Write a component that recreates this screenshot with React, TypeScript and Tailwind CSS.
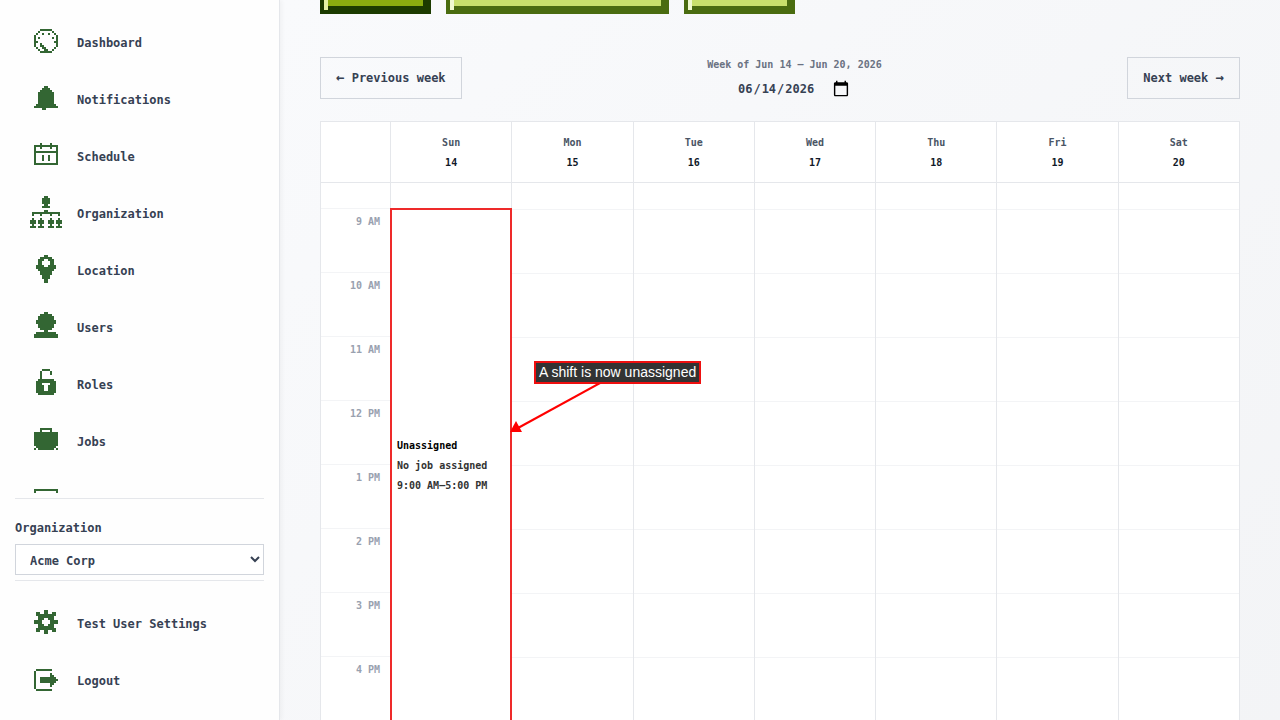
type Bitmap = [row: number, cols: number[][]][];

// 16x16 pixel icons: for each row, the inclusive column spans that are filled.
const icons: Record<string, Bitmap> = {
  dashboard: [
    [2, [[5, 10]]],
    [3, [[4, 4], [11, 11]]],
    [4, [[3, 3], [6, 6], [9, 9], [12, 12]]],
    [5, [[2, 2], [13, 13]]],
    [6, [[2, 2], [4, 4], [11, 11], [13, 13]]],
    [7, [[2, 2], [13, 13]]],
    [8, [[2, 3], [12, 13]]],
    [9, [[2, 2], [5, 5], [13, 13]]],
    [10, [[2, 2], [5, 6], [13, 13]]],
    [11, [[3, 3], [6, 7], [12, 12]]],
    [12, [[4, 4], [7, 8], [11, 11]]],
    [13, [[5, 10]]],
  ],
  bell: [
    [2, [[7, 8]]],
    [3, [[6, 9]]],
    [4, [[5, 10]]],
    [5, [[4, 11]]],
    [6, [[4, 11]]],
    [7, [[4, 11]]],
    [8, [[4, 11]]],
    [9, [[4, 11]]],
    [10, [[4, 11]]],
    [11, [[3, 12]]],
    [12, [[2, 13]]],
    [13, [[6, 7]]],
  ],
  calendar: [
    [2, [[5, 5], [10, 10]]],
    [3, [[2, 13]]],
    [4, [[2, 2], [5, 5], [10, 10], [13, 13]]],
    [5, [[2, 2], [13, 13]]],
    [6, [[2, 13]]],
    [7, [[2, 2], [13, 13]]],
    [8, [[2, 2], [6, 6], [9, 9], [13, 13]]],
    [9, [[2, 2], [6, 6], [9, 9], [13, 13]]],
    [10, [[2, 2], [6, 6], [9, 9], [13, 13]]],
    [11, [[2, 2], [13, 13]]],
    [12, [[2, 13]]],
  ],
  organization: [
    [0, [[7, 8]]],
    [1, [[6, 9]]],
    [2, [[6, 9]]],
    [3, [[6, 9]]],
    [4, [[7, 8]]],
    [5, [[6, 9]]],
    [7, [[7, 8]]],
    [8, [[1, 14]]],
    [9, [[1, 1], [5, 5], [10, 10], [14, 14]]],
    [11, [[1, 1], [5, 5], [10, 10], [14, 14]]],
    [12, [[0, 2], [4, 6], [9, 11], [13, 15]]],
    [13, [[0, 2], [4, 6], [9, 11], [13, 15]]],
    [14, [[1, 1], [5, 5], [10, 10], [14, 14]]],
    [15, [[0, 2], [4, 6], [9, 11], [13, 15]]],
  ],
  pin: [
    [1, [[7, 8]]],
    [2, [[5, 10]]],
    [3, [[4, 6], [9, 11]]],
    [4, [[4, 5], [10, 11]]],
    [5, [[4, 5], [10, 11]]],
    [6, [[3, 6], [9, 12]]],
    [7, [[3, 12]]],
    [8, [[4, 11]]],
    [9, [[5, 10]]],
    [10, [[5, 10]]],
    [11, [[6, 9]]],
    [12, [[6, 9]]],
    [13, [[7, 8]]],
    [14, [[7, 8]]],
  ],
  user: [
    [1, [[7, 8]]],
    [2, [[5, 10]]],
    [3, [[4, 11]]],
    [4, [[4, 11]]],
    [5, [[3, 12]]],
    [6, [[3, 12]]],
    [7, [[4, 11]]],
    [8, [[4, 11]]],
    [9, [[5, 10]]],
    [10, [[7, 8]]],
    [11, [[3, 12]]],
    [12, [[2, 13]]],
    [13, [[2, 13]]],
  ],
  lock: [
    [1, [[6, 9]]],
    [2, [[5, 5], [10, 10]]],
    [3, [[5, 5], [10, 10]]],
    [4, [[5, 5]]],
    [5, [[5, 5]]],
    [6, [[4, 11]]],
    [7, [[3, 12]]],
    [8, [[3, 5], [10, 12]]],
    [9, [[3, 6], [9, 12]]],
    [10, [[3, 6], [9, 12]]],
    [11, [[3, 6], [9, 12]]],
    [12, [[3, 12]]],
    [13, [[4, 11]]],
  ],
  briefcase: [
    [2, [[5, 10]]],
    [3, [[5, 5], [10, 10]]],
    [4, [[2, 13]]],
    [5, [[2, 13]]],
    [6, [[2, 13]]],
    [7, [[2, 13]]],
    [8, [[2, 13]]],
    [9, [[2, 13]]],
    [10, [[2, 13]]],
    [11, [[3, 12]]],
    [12, [[2, 2], [4, 11], [13, 13]]],
  ],
  panel: [
    [4, [[2, 13]]],
    [5, [[2, 2], [13, 13]]],
    [6, [[2, 2], [13, 13]]],
    [7, [[2, 2], [13, 13]]],
    [8, [[2, 13]]],
  ],
  gear: [
    [2, [[7, 8]]],
    [3, [[3, 4], [7, 8], [11, 12]]],
    [4, [[3, 12]]],
    [5, [[4, 11]]],
    [6, [[4, 6], [9, 11]]],
    [7, [[2, 5], [10, 13]]],
    [8, [[2, 5], [10, 13]]],
    [9, [[4, 6], [9, 11]]],
    [10, [[4, 11]]],
    [11, [[3, 12]]],
    [12, [[3, 4], [7, 8], [11, 12]]],
    [13, [[7, 8]]],
  ],
  logout: [
    [3, [[3, 10]]],
    [4, [[2, 2]]],
    [5, [[2, 2], [10, 10]]],
    [6, [[2, 2], [10, 11]]],
    [7, [[2, 2], [5, 12]]],
    [8, [[2, 2], [5, 13]]],
    [9, [[2, 2], [5, 12]]],
    [10, [[2, 2], [10, 11]]],
    [11, [[2, 2], [10, 10]]],
    [12, [[2, 2]]],
    [13, [[3, 10]]],
  ],
};

const navItems = [
  { label: "Dashboard", icon: "dashboard" },
  { label: "Notifications", icon: "bell" },
  { label: "Schedule", icon: "calendar" },
  { label: "Organization", icon: "organization" },
  { label: "Location", icon: "pin" },
  { label: "Users", icon: "user" },
  { label: "Roles", icon: "lock" },
  { label: "Jobs", icon: "briefcase" },
  { label: "", icon: "panel" },
];

const days = [
  { name: "Sun", date: 14 },
  { name: "Mon", date: 15 },
  { name: "Tue", date: 16 },
  { name: "Wed", date: 17 },
  { name: "Thu", date: 18 },
  { name: "Fri", date: 19 },
  { name: "Sat", date: 20 },
];

const hours = ["9 AM", "10 AM", "11 AM", "12 PM", "1 PM", "2 PM", "3 PM", "4 PM"];

const gridCols = "grid grid-cols-[69px_repeat(7,minmax(0,1fr))]";

function PixelIcon({ name }: { name: string }) {
  return (
    <svg viewBox="0 0 16 16" className="h-8 w-8 shrink-0 fill-[#336633]" shapeRendering="crispEdges" aria-hidden="true">
      {icons[name].map(([row, spans]) =>
        spans.map(([from, to]) => (
          <rect key={`${row}-${from}`} x={from} y={row} width={to - from + 1} height={1} />
        ))
      )}
    </svg>
  );
}

function NavLink({ label, icon }: { label: string; icon: string }) {
  return (
    <a href="#" className="flex h-[42px] shrink-0 items-center gap-[15px] px-[15px] text-gray-700">
      <PixelIcon name={icon} />
      <span className="pt-1">{label}</span>
    </a>
  );
}

function Sidebar() {
  return (
    <aside className="flex w-[280px] shrink-0 flex-col border-r border-gray-200 bg-[#fefefe] px-[15px] py-5 shadow-[2px_0_4px_rgba(0,0,0,0.04)]">
      <nav className="mb-[5px] flex min-h-0 flex-1 flex-col gap-[15px] overflow-hidden">
        {navItems.map((item) => (
          <NavLink key={item.icon} {...item} />
        ))}
      </nav>

      <div className="border-y border-gray-200 pb-[5px] pt-[19px]">
        <label htmlFor="organization" className="block leading-5 text-gray-700">
          Organization
        </label>
        <select
          id="organization"
          className="mt-1.5 block h-[31px] w-full border border-gray-300 bg-white pl-2.5 pt-0.5 text-gray-700"
          defaultValue="acme"
        >
          <option value="acme">Acme Corp</option>
        </select>
      </div>

      <div className="mt-5 flex flex-col gap-[15px]">
        <NavLink label="Test User Settings" icon="gear" />
        <NavLink label="Logout" icon="logout" />
      </div>
    </aside>
  );
}

function ViewButtons() {
  return (
    <div className="flex h-3.5 shrink-0 items-end gap-[15px] overflow-hidden">
      <button
        type="button"
        className="h-12 w-[111px] shrink-0 border-4 border-[#1c3b00] bg-[#8aac0f] shadow-[inset_4px_4px_0_#e4f2a4,inset_-4px_-4px_0_#1c3b00]"
      />
      <button
        type="button"
        className="h-12 w-[223px] shrink-0 border-4 border-[#4a6c10] bg-[#c8e06c] shadow-[inset_4px_4px_0_#f0fad0,inset_-4px_-4px_0_#4a6c10]"
      />
      <button
        type="button"
        className="h-12 w-[111px] shrink-0 border-4 border-[#4a6c10] bg-[#c8e06c] shadow-[inset_4px_4px_0_#f0fad0,inset_-4px_-4px_0_#4a6c10]"
      />
    </div>
  );
}

function WeekPicker() {
  return (
    <div className="mt-[43px] flex shrink-0 items-center justify-between">
      <button type="button" className="h-[42px] border border-gray-300 px-[15px] text-gray-700">
        <span className="text-[14px] leading-4">←</span> Previous week
      </button>
      <div className="flex h-[42px] flex-col items-center justify-between">
        <label htmlFor="week" className="text-[10px] leading-4 text-gray-500">
          Week of Jun 14 – Jun 20, 2026
        </label>
        <input
          id="week"
          type="date"
          defaultValue="2026-06-14"
          className="h-5 bg-transparent text-gray-700 [&::-webkit-calendar-picker-indicator]:ms-0 [&::-webkit-calendar-picker-indicator]:h-[18px] [&::-webkit-calendar-picker-indicator]:w-[18px]"
        />
      </div>
      <button type="button" className="h-[42px] border border-gray-300 px-[15px] text-gray-700">
        Next week <span className="text-[14px] leading-4">→</span>
      </button>
    </div>
  );
}

function Shift() {
  return (
    <div className="absolute -left-px -right-px top-[25px] z-10 flex h-[514px] flex-col justify-center border-2 border-[#ee2a2a] bg-white px-[5px] pt-0.5 text-[10px] leading-5 text-[#333333]">
      <div className="text-black">Unassigned</div>
      <div>No job assigned</div>
      <div>9:00 AM–5:00 PM</div>
    </div>
  );
}

// Callout with an arrow that points back at the shift's right edge.
function Callout() {
  return (
    <div className="absolute left-[119px] top-[178px] z-20 flex flex-col">
      <div className="ml-6 border-2 border-[#ee0f0f] bg-[#333333] px-[3px] font-['Liberation_Sans',Arial,sans-serif] text-[14px] font-normal leading-[19px] whitespace-nowrap text-white">
        A shift is now unassigned
      </div>
      <svg width="100" height="52" viewBox="0 0 100 52" className="-mt-px" aria-hidden="true">
        <path d="M90 0L8 45" stroke="#ff0000" strokeWidth="2" />
        <path d="M0 49L6 38L12 49Z" fill="#ff0000" />
      </svg>
    </div>
  );
}

function WeekCalendar() {
  return (
    <div className="mt-[22px] flex min-h-0 flex-1 flex-col overflow-hidden border border-b-0 border-gray-200 bg-white text-[10px]">
      <div className={`${gridCols} shrink-0 border-b border-gray-200`}>
        <div />
        {days.map((day) => (
          <div key={day.name} className="border-l border-gray-200 pb-[9px] pt-[11px] text-center leading-5">
            <div className="text-gray-600">{day.name}</div>
            <div className="text-gray-900">{day.date}</div>
          </div>
        ))}
      </div>

      <div className={`${gridCols} shrink-0`}>
        <div className="text-right text-gray-400">
          <div className="h-[26px] border-b border-gray-100" />
          {hours.map((hour) => (
            <div key={hour} className="h-16 border-b border-gray-100 pr-2.5 pt-[3px] leading-5">
              {hour}
            </div>
          ))}
        </div>
        {days.map((day) => (
          <div key={day.name} className="relative border-l border-gray-200 pt-[26px]">
            {hours.map((hour) => (
              <div key={hour} className="h-16 border-t border-gray-100" />
            ))}
            {day.date === 14 && <Shift />}
            {day.date === 14 && <Callout />}
          </div>
        ))}
      </div>
    </div>
  );
}

export default function App() {
  return (
    <div className="flex h-screen overflow-hidden bg-linear-135 from-[#fafbfd] to-gray-100 font-['DejaVu_Sans_Mono','Liberation_Mono',monospace] text-[12px] font-bold">
      <Sidebar />
      <main className="flex min-w-0 flex-1 flex-col px-10">
        <ViewButtons />
        <WeekPicker />
        <WeekCalendar />
      </main>
    </div>
  );
}
